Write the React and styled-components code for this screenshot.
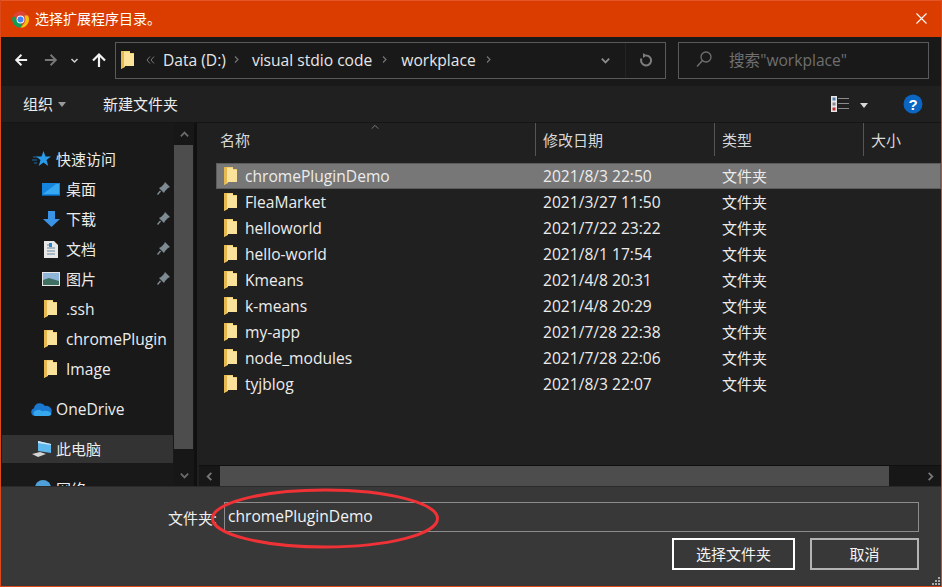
import React from 'react';
import styled, { createGlobalStyle } from 'styled-components';

const LATIN = '15.6px';

const Global = createGlobalStyle`
  html, body { margin: 0; padding: 0; background: #383838; }
  body { font-family: "Open Sans", "Noto Sans CJK SC", sans-serif; font-size: 15px; color: #f0f0f0; }
  * { box-sizing: border-box; }
`;

const Window = styled.div`
  position: relative; width: 942px; height: 587px; display: flex; flex-direction: column;
  border: 1px solid #dc4a1c; border-top: 0; overflow: hidden; background: #202020;
`;
const TitleBar = styled.div`
  height: 37px; flex: none; background: #db3d00; display: flex; align-items: center;
  padding: 0 14px 0 11px; font-size: 14px; color: #fff; gap: 6px; border-top: 1px solid #e2562a;
`;
const TitleText = styled.span`flex: 1; line-height: 36px;`;
const CloseSlot = styled.span`display: flex; padding-bottom: 2px;`;
const NavBar = styled.div`
  height: 49px; flex: none; background: #191919; display: flex; align-items: center; padding: 0 12px 3px 0;
`;
const NavButton = styled.div`
  width: ${p => p.$w}px; display: flex; justify-content: center; align-items: center; height: 36px; flex: none;
`;
const AddressBox = styled.div`
  width: 551px; height: 37px; margin-left: 4px; border: 1px solid #5a5a5a; display: flex; align-items: center;
  flex: none; background: #191919; padding-left: 5px;
`;
const Crumbs = styled.div`display: flex; align-items: center; flex: 1; padding-left: 12px; padding-bottom: 1px;`;
const Crumb = styled.span`
  color: #e6e6e6; white-space: nowrap; font-size: ${LATIN};
  margin: 0 ${p => p.$mr}px 0 ${p => p.$ml}px;
`;
const AddressEnd = styled.div`
  width: 40px; height: 100%; border-left: 1px solid #242424; display: flex; align-items: center; justify-content: center;
`;
const DropBox = styled.div`width: 40px; display: flex; justify-content: center;`;
const SearchBox = styled.div`
  width: 251px; height: 37px; margin-left: 12px; border: 1px solid #5a5a5a; display: flex; align-items: center;
  padding: 0 0 2px 17px; gap: 17px; color: #6f6f6f; flex: none; white-space: nowrap; font-size: ${LATIN};
`;
const ToolBar = styled.div`
  height: 37px; flex: none; background: #202020; display: flex; align-items: center; padding: 0 18px 0 22px;
  border-bottom: 1px solid #151515; color: #ececec;
`;
const ToolItem = styled.span`
  display: flex; align-items: center; gap: 5px; padding-bottom: 2px; margin-right: ${p => p.$mr || 0}px;
`;
const Spacer = styled.div`flex: 1;`;
const Caret = styled.span`
  width: 0; height: 0; border-left: 4.5px solid transparent; border-right: 4.5px solid transparent;
  border-top: 5px solid ${p => p.$c || '#9a9a9a'}; margin-top: 2px;
`;
const ViewGroup = styled.div`display: flex; align-items: center; gap: 11px; margin-right: 35px;`;
const Body = styled.div`flex: 1; display: flex; min-height: 0;`;
const SideCol = styled.div`width: 173px; flex: none; background: #191919; overflow: hidden; padding: 21px 0 0 1px;`;
const SideRow = styled.div`
  height: ${p => p.$hover ? 28 : 30}px; display: flex; align-items: center; white-space: nowrap; position: relative;
  padding-left: ${p => p.$top ? 27 : 39}px; color: #ececec;
  margin-right: 1px;
  margin-bottom: ${p => p.$mb || 0}px;
  background: ${p => p.$hover ? '#333333' : 'transparent'};
`;
const SideIcon = styled.span`
  width: ${p => p.$top ? 27 : 25}px; height: 20px; flex: none; display: flex; align-items: center;
  padding-left: ${p => p.$pl || 0}px;
`;
const SideLabel = styled.span`
  font-size: ${p => p.$latin ? LATIN : '15px'};
  padding-bottom: ${p => p.$latin ? 0 : 2}px;
`;
const Pin = styled.span`position: absolute; right: 3px; top: 8px; display: flex;`;
const VScroll = styled.div`
  width: 20px; flex: none; background: #171717; display: flex; flex-direction: column; align-items: center;
`;
const ScrollBtn = styled.div`height: ${p => p.$h}px; width: 100%; flex: none; display: flex; align-items: center; justify-content: center;`;
const VThumb = styled.div`width: 19px; margin-right: 1px; height: 304px; background: #4d4d4d; flex: none;`;
const VTrack = styled.div`flex: 1;`;
const Gutter = styled.div`width: 3px; flex: none; background: #101010;`;
const Main = styled.div`flex: 1; min-width: 0; display: flex; flex-direction: column; background: #202020;`;
const Header = styled.div`height: 33px; flex: none; display: flex; position: relative; color: #d8d8d8;`;
const HeadCell = styled.div`
  width: ${p => p.$w}px; flex: none; height: 33px; display: flex; align-items: center; padding: 0 0 1px ${p => p.$pl}px;
  border-right: ${p => p.$last ? 0 : '1px solid #555'}; white-space: nowrap;
`;
const SortMark = styled.span`position: absolute; left: 173px; top: -1px; display: flex;`;
const FileList = styled.div`flex: 1; padding: 7px 0 0 19px;`;
const FileRow = styled.div`
  height: 26px; display: flex; align-items: center; color: #ececec; white-space: nowrap;
  background: ${p => p.$sel ? '#777777' : 'transparent'};
  border: 1px solid ${p => p.$sel ? '#5c5c5c' : 'transparent'};
`;
const NameCell = styled.div`
  width: 326px; flex: none; display: flex; align-items: center; gap: 8px; padding-left: 7px; font-size: ${LATIN};
`;
const DateCell = styled.div`width: 179px; flex: none; font-size: ${LATIN};`;
const TypeCell = styled.div`padding-bottom: 2px;`;
const HScroll = styled.div`height: 21px; flex: none; background: #171717; display: flex; border-top: 1px solid #101010; margin-left: 2px;`;
const HBtn = styled.div`
  width: ${p => p.$w}px; flex: none; display: flex; align-items: center;
  justify-content: ${p => p.$end ? 'flex-end' : 'center'}; padding-right: ${p => p.$end ? 5 : 0}px;
`;
const HThumb = styled.div`width: 669px; flex: none; background: #4d4d4d;`;
const Footer = styled.div`
  height: 100px; flex: none; background: #383838; border-top: 1px solid #2a2a2a; position: relative;
  padding: 15px 22px 0 167px; display: flex; flex-direction: column;
`;
const FieldRow = styled.div`display: flex; align-items: center; gap: 5px;`;
const FieldLabel = styled.span`color: #f0f0f0; white-space: nowrap; width: 51px;`;
const FieldInput = styled.div`
  flex: 1; height: 30px; border: 1px solid #8c8c8c; display: flex; align-items: center; padding: 0 3px 3px;
  color: #f2f2f2; font-size: ${LATIN};
`;
const BtnRow = styled.div`display: flex; justify-content: flex-end; gap: 15px; margin-top: 6px;`;
const DialogBtn = styled.div`
  width: ${p => p.$w}px; height: 32px; display: flex; align-items: center; justify-content: center; color: #f2f2f2;
  border: 2px solid ${p => p.$primary ? '#ffffff' : '#b4b4b4'}; background: #383838; padding-bottom: 2px;
`;
const Annotation = styled.svg`position: absolute; left: 210px; top: 488px; pointer-events: none;`;
const Grip = styled.svg`position: absolute; right: 1px; bottom: 1px;`;
const Glyph = styled.svg`flex: none; display: block; transform: ${p => p.$tf || 'none'};`;

const Folder = () => (
  <Glyph width="13" height="18" viewBox="0 0 13 18">
    <path d="M0 0h9v2h4v13H4v1l-4 2z" fill="#f3cf6f" />
    <path d="M3 1h6v2h4v12H3z" fill="#fbe29a" />
    <path d="M0 0h3v15l-3 3z" fill="#e5b850" />
  </Glyph>
);
const Arrow = ({ tf, c, size = 14 }) => (
  <Glyph width={size} height={size} viewBox="0 0 16 16" $tf={tf}>
    <path d="M15 8H2.500M8.500 2L2.500 8l6 6" stroke={c} strokeWidth="2.200" fill="none" />
  </Glyph>
);
const Chev = ({ rot = 0, c = '#808080', size = 12, sw = 2 }) => (
  <Glyph width={size} height={size} viewBox="0 0 12 12" $tf={`rotate(${rot}deg)`}>
    <path d="M2 4l4 4 4-4" stroke={c} strokeWidth={sw} fill="none" />
  </Glyph>
);
const DoubleChev = () => (
  <Glyph width="9" height="8" viewBox="0 0 9 8">
    <path d="M4 .5L1 4l3 3.500M8 .5L5 4l3 3.500" stroke="#777" strokeWidth="1" fill="none" />
  </Glyph>
);
const ChromeIcon = () => (
  <Glyph width="17" height="17" viewBox="0 0 48 48">
    <circle cx="24" cy="24" r="23" fill="#db4437" />
    <path d="M24 47A23 23 0 0 1 4 12.500L14 24l10 10h5z" fill="#0f9d58" />
    <path d="M24 47l11-13 3-10-3-11h10a23 23 0 0 1-21 34z" fill="#f4c20d" />
    <circle cx="24" cy="24" r="11" fill="#fff" />
    <circle cx="24" cy="24" r="8.500" fill="#4285f4" />
  </Glyph>
);
const PinIcon = () => (
  <Glyph width="13" height="13" viewBox="0 0 13 13">
    <path d="M8 0l5 5-2 1-3 3-1 2-5-5 2-1 3-3z" fill="#7f8b92" />
    <path d="M3.500 9L.5 12.500" stroke="#7f8b92" strokeWidth="1.500" />
  </Glyph>
);
const Star = () => (
  <Glyph width="19" height="16" viewBox="0 0 19 16">
    <path d="M11.500 0l2 5.500H19l-4.500 3.600 1.800 6-4.800-3.500-4.800 3.500 1.800-6L4 5.500h5.500z" fill="#2a9be8" />
    <path d="M1 6h5M0 9h5M2 12h3" stroke="#1d6aa6" strokeWidth="1" />
  </Glyph>
);
const Desktop = () => (
  <Glyph width="18" height="13" viewBox="0 0 18 13">
    <rect width="18" height="13" fill="#1584dc" />
    <path d="M1 11L14 1h3v10z" fill="#36a8f2" />
    <path d="M0 12h18v1H0z" fill="#0d5ea0" />
  </Glyph>
);
const Download = () => (
  <Glyph width="17" height="16" viewBox="0 0 17 16"><path d="M5 0h7v8h5l-8.500 8L0 8h5z" fill="#3a93e4" /></Glyph>
);
const Doc = () => (
  <Glyph width="14" height="17" viewBox="0 0 14 17">
    <path d="M0 0h10l4 4v13H0z" fill="#e8e8e8" />
    <path d="M3 4h5M3 7h8M3 10h8M3 13h8" stroke="#6a8aa0" strokeWidth="1" />
    <path d="M5 2h3v4H5z" fill="#2b87cc" />
  </Glyph>
);
const Pic = () => (
  <Glyph width="18" height="14" viewBox="0 0 18 14">
    <rect width="18" height="14" fill="#e6e6e6" />
    <rect x="1" y="1" width="16" height="12" fill="#8fb6d8" />
    <path d="M1 8l6-2 10 3v4H1z" fill="#3f6f60" />
  </Glyph>
);
const Cloud = () => (
  <Glyph width="21" height="14" viewBox="0 0 21 14">
    <path d="M4 14a4 4 0 0 1-1-7.800A6 6 0 0 1 14 4a4.500 4.500 0 0 1 3 10z" fill="#1b78d0" />
    <path d="M4 14a3 3 0 0 1 1-5.500C8 7 10 8 11 9.500 14 8 19 9 20.500 12c-.5 1.200-1.500 2-3.500 2z" fill="#38a8ee" />
  </Glyph>
);
const PC = () => (
  <Glyph width="20" height="17" viewBox="0 0 20 17">
    <path d="M6 0l13 3v9L6 10z" fill="#5db8ee" />
    <path d="M6 0l13 3v1L6 2z" fill="#cfe8f6" />
    <path d="M0 13l8-2 6 2-8 3z" fill="#d5d5d5" />
  </Glyph>
);
const Globe = () => (
  <Glyph width="20" height="20" viewBox="0 0 20 20">
    <circle cx="11" cy="9" r="8" fill="#4f9fd8" />
    <path d="M0 14h12v3H0z" fill="#c8c8c8" />
  </Glyph>
);
const Search = () => (
  <Glyph width="16" height="17" viewBox="0 0 16 17">
    <circle cx="10" cy="6" r="5" stroke="#6f6f6f" strokeWidth="1.300" fill="none" />
    <path d="M6.500 9.500L1 15.500" stroke="#6f6f6f" strokeWidth="1.400" />
  </Glyph>
);
const Refresh = () => (
  <Glyph width="14" height="14" viewBox="0 0 14 14">
    <path d="M7 2.500a5 5 0 1 1-4.500 3" stroke="#7d7d7d" strokeWidth="2" fill="none" />
    <path d="M4 0l4 2.500-4 2.500z" fill="#7d7d7d" />
  </Glyph>
);
const ViewIcon = () => (
  <Glyph width="18" height="16" viewBox="0 0 18 16">
    <rect width="6" height="16" fill="#e6e6e6" />
    <rect x="1.500" y="1.500" width="3" height="3" fill="#4a7fb0" />
    <rect x="1.500" y="6.500" width="3" height="3" fill="#888" />
    <rect x="1.500" y="11.500" width="3" height="3" fill="#c03030" />
    <path d="M7 2.500h11M7 7.500h11M7 12.500h11" stroke="#8a8a8a" strokeWidth="1" />
  </Glyph>
);
const Help = () => (
  <Glyph width="20" height="20" viewBox="0 0 20 20">
    <circle cx="10" cy="10" r="9.500" fill="#0a66c2" />
    <text x="10" y="15.500" textAnchor="middle" fontSize="15" fontWeight="700" fill="#fff" fontFamily="Liberation Sans, sans-serif">?</text>
  </Glyph>
);
const Close = () => (
  <Glyph width="11" height="11" viewBox="0 0 11 11">
    <path d="M.5.5l10 10M10.500.5l-10 10" stroke="#fff" strokeWidth="1.100" />
  </Glyph>
);

const files = [
  ['chromePluginDemo', '2021/8/3 22:50'], ['FleaMarket', '2021/3/27 11:50'], ['helloworld', '2021/7/22 23:22'],
  ['hello-world', '2021/8/1 17:54'], ['Kmeans', '2021/4/8 20:31'], ['k-means', '2021/4/8 20:29'],
  ['my-app', '2021/7/28 22:38'], ['node_modules', '2021/7/28 22:06'], ['tyjblog', '2021/8/3 22:07'],
];
const side = [
  { t: '快速访问', i: <Star />, top: true, pl: 3 },
  { t: '桌面', i: <Desktop />, pin: true, pl: 1 },
  { t: '下载', i: <Download />, pin: true, pl: 2 },
  { t: '文档', i: <Doc />, pin: true, pl: 3 },
  { t: '图片', i: <Pic />, pin: true, pl: 1 },
  { t: '.ssh', i: <Folder />, pl: 3, latin: true },
  { t: 'chromePlugin', i: <Folder />, pl: 3, latin: true },
  { t: 'Image', i: <Folder />, pl: 3, mb: 10, latin: true },
  { t: 'OneDrive', i: <Cloud />, top: true, pl: 2, mb: 11, latin: true },
  { t: '此电脑', i: <PC />, top: true, pl: 3, hover: true, mb: 11 },
  { t: '网络', i: <Globe />, top: true, pl: 3 },
];

export default function App() {
  return (
    <>
      <Global />
      <Window>
        <TitleBar>
          <ChromeIcon />
          <TitleText>选择扩展程序目录。</TitleText>
          <CloseSlot><Close /></CloseSlot>
        </TitleBar>
        <NavBar>
          <NavButton $w={40}><Arrow c="#f2f2f2" /></NavButton>
          <NavButton $w={20}><Arrow tf="scaleX(-1)" c="#777" /></NavButton>
          <NavButton $w={26}><Chev c="#cfcfcf" size={9} /></NavButton>
          <NavButton $w={24}><Arrow tf="rotate(90deg)" c="#f2f2f2" size={16} /></NavButton>
          <AddressBox>
            <Folder />
            <Crumbs>
              <DoubleChev />
              <Crumb $ml={8} $mr={6}>Data (D:)</Crumb>
              <Chev rot={-90} c="#777" size={9} sw={1.500} />
              <Crumb $ml={11} $mr={8}>visual stdio code</Crumb>
              <Chev rot={-90} c="#777" size={9} sw={1.500} />
              <Crumb $ml={12} $mr={8}>workplace</Crumb>
              <Chev rot={-90} c="#777" size={9} sw={1.500} />
            </Crumbs>
            <DropBox><Chev c="#8a8a8a" size={11} /></DropBox>
            <AddressEnd><Refresh /></AddressEnd>
          </AddressBox>
          <SearchBox><Search />搜索"workplace"</SearchBox>
        </NavBar>
        <ToolBar>
          <ToolItem $mr={37}>组织<Caret /></ToolItem>
          <ToolItem>新建文件夹</ToolItem>
          <Spacer />
          <ViewGroup><ViewIcon /><Caret $c="#d8d8d8" /></ViewGroup>
          <Help />
        </ToolBar>
        <Body>
          <SideCol>
            {side.map(s => (
              <SideRow key={s.t} $top={s.top} $hover={s.hover} $mb={s.mb}>
                <SideIcon $top={s.top} $pl={s.pl}>{s.i}</SideIcon>
                <SideLabel $latin={s.latin}>{s.t}</SideLabel>
                {s.pin && <Pin><PinIcon /></Pin>}
              </SideRow>
            ))}
          </SideCol>
          <VScroll>
            <ScrollBtn $h={22}><Chev rot={180} c="#6a6a6a" size={11} /></ScrollBtn>
            <VThumb />
            <VTrack />
            <ScrollBtn $h={22}><Chev c="#6a6a6a" size={11} /></ScrollBtn>
          </VScroll>
          <Gutter />
          <Main>
            <Header>
              <HeadCell $w={339} $pl={23}>名称</HeadCell>
              <SortMark><Chev rot={180} c="#8a8a8a" size={10} sw={1} /></SortMark>
              <HeadCell $w={179} $pl={7}>修改日期</HeadCell>
              <HeadCell $w={149} $pl={7}>类型</HeadCell>
              <HeadCell $w={78} $pl={7} $last>大小</HeadCell>
            </Header>
            <FileList>
              {files.map(([n, d], i) => (
                <FileRow key={n} $sel={i === 0}>
                  <NameCell><Folder />{n}</NameCell>
                  <DateCell>{d}</DateCell>
                  <TypeCell>文件夹</TypeCell>
                </FileRow>
              ))}
            </FileList>
            <HScroll>
              <HBtn $w={21}><Chev rot={90} c="#777" size={11} /></HBtn>
              <HThumb />
              <HBtn $w={52} $end><Chev rot={-90} c="#777" size={11} /></HBtn>
            </HScroll>
          </Main>
        </Body>
        <Footer>
          <FieldRow>
            <FieldLabel>文件夹:</FieldLabel>
            <FieldInput>chromePluginDemo</FieldInput>
          </FieldRow>
          <BtnRow>
            <DialogBtn $w={123} $primary>选择文件夹</DialogBtn>
            <DialogBtn $w={109}>取消</DialogBtn>
          </BtnRow>
          <Grip width="9" height="9" viewBox="0 0 9 9">
            <path d="M7 1h2v2H7zM4 4h2v2H4zM7 4h2v2H7zM1 7h2v2H1zM4 7h2v2H4zM7 7h2v2H7z" fill="#a8a8a8" />
          </Grip>
        </Footer>
        <Annotation width="232" height="64" viewBox="0 0 232 64">
          <ellipse cx="114" cy="30.500" rx="112.500" ry="28.500" stroke="#f03236" strokeWidth="3" fill="none" />
        </Annotation>
      </Window>
    </>
  );
}
